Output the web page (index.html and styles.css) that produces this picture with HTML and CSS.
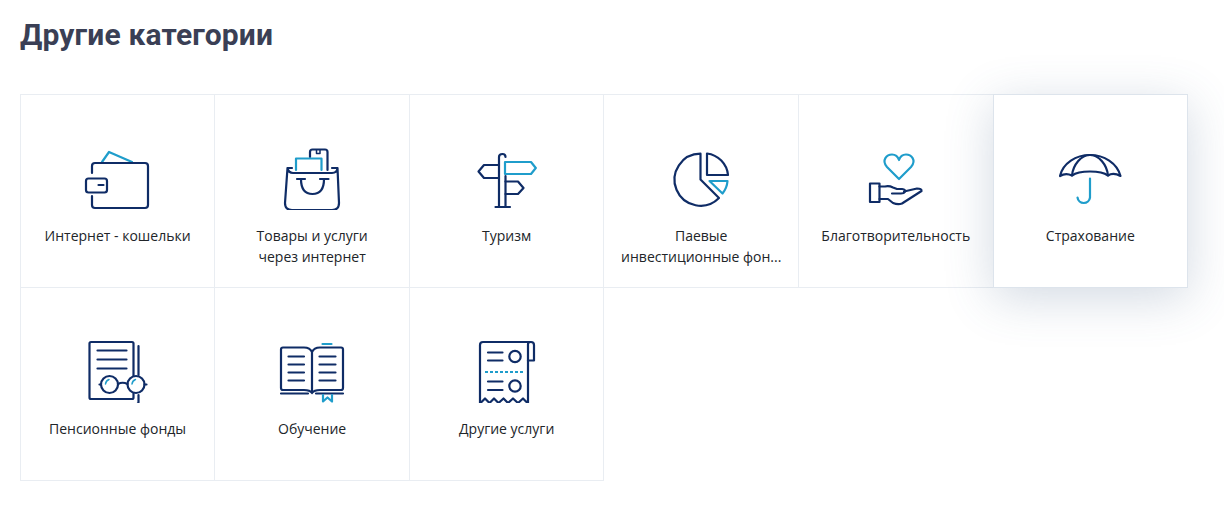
FILE: index.html
```html
<!DOCTYPE html>
<html lang="ru">
<head>
<meta charset="UTF-8">
<title>Другие категории</title>
<link rel="stylesheet" href="styles.css">
</head>
<body>
<h1 class="title">Другие категории</h1>
<div class="cats">
    <a class="cat">
        <svg class="ico" viewBox="78 146 80 64">
            <path class="bl" d="M102 162 L109 152 L132 162"/>
            <path class="dk" d="M92 173 V166 Q92 163 95 163 H145 Q148 163 148 166 V205 Q148 208 145 208 H95 Q92 208 92 205 V196"/>
            <rect class="dk" x="86" y="178.5" width="21" height="14" rx="2.5"/>
            <path class="dk" d="M98.5 185 H103.5"/>
        </svg>
        <span class="cat-name">Интернет - кошельки</span>
    </a>
    <a class="cat">
        <svg class="ico" viewBox="272 146 80 64">
            <path class="dk" d="M310 157 V152 Q310 149.5 312.5 149.5 H325 Q327.5 149.5 327.5 152 V170"/>
            <path class="dk thin" d="M316.5 150 V153.5 H320 V150"/>
            <path class="bl" d="M296 170 V158.5 H321.5 V170"/>
            <path class="dk" d="M292 168 H287.5 L285 203 Q285 210 292 210 H332 Q339 210 339 203 L337.5 168 H332 M287.5 168 Q288.5 173 293 173 H332 Q337 173 337.5 168"/>
            <path class="dk" d="M297 179 H305 M320 179 H328.5 M301 179 Q301 194 312.5 194 Q324 194 324 179"/>
        </svg>
        <span class="cat-name">Товары и услуги<br>через интернет</span>
    </a>
    <a class="cat">
        <svg class="ico" viewBox="467 146 80 64">
            <path class="dk" d="M499 207 V157 Q499 154 502.5 154 Q505.5 154 505.5 157 M505.5 176 V207 M495.5 207 H510"/>
            <path class="dk" d="M499 165 H484 L478.5 171.5 L484 178 H499"/>
            <path class="dk" d="M505.5 181.5 H518 L523.5 188 L518 194 H505.5"/>
            <path class="bl" d="M505 162 H531 L535.8 168 L531 174 H505 Z"/>
        </svg>
        <span class="cat-name">Туризм</span>
    </a>
    <a class="cat">
        <svg class="ico" viewBox="661 146 80 64">
            <path class="dk" d="M700.5 153.7 A26 26 0 1 0 719 198 L700.5 179.5 Z"/>
            <path class="dk" d="M707 153.5 A24 24 0 0 1 728 175 H707 Z"/>
            <path class="bl" d="M709.5 181 H727.5 Q727 188 722.5 193.5 Z"/>
        </svg>
        <span class="cat-name">Паевые<br>инвестиционные фон...</span>
    </a>
    <a class="cat">
        <svg class="ico" viewBox="856 146 80 64">
            <path class="bl" d="M899 179 L887 167 C881 160 887 154.5 892 154.5 C895.5 154.5 898 157 899 160 C900 157 902.5 154.5 906 154.5 C911 154.5 917 160 911 167 Z"/>
            <rect class="dk" x="870" y="183.5" width="9.5" height="18.5"/>
            <path class="dk" d="M879.5 186.5 H885 Q889 185.5 893 187.5 L897 189 H902 Q906 189.5 905 192 Q904 193.5 901 193.5 H892 M904 191.5 L917 188.5 Q922 188.5 921.5 191 L902 203.5 Q898 205 893 203 L888 199 H879.5"/>
        </svg>
        <span class="cat-name">Благотворительность</span>
    </a>
    <a class="cat is-active">
        <svg class="ico" viewBox="1050 146 80 64">
            <path class="dk" d="M1060 176 C1063 163 1076 155 1090 155 C1104 155 1117 163 1120.5 176 C1116 173.5 1111 173.5 1108 175.5 C1104 172.5 1097 171.5 1090 171.5 C1083 171.5 1076 172.5 1072 175.5 C1068 173.5 1064 173.5 1060 176 Z"/>
            <path class="dk" d="M1072 175.5 C1073 165 1081 155 1090 155 C1099 155 1107 165 1108 175.5"/>
            <path class="bl" d="M1090 178.5 V197.5 A6.3 6.3 0 0 1 1077.5 197.5"/>
        </svg>
        <span class="cat-name">Страхование</span>
    </a>
    <a class="cat">
        <svg class="ico" viewBox="78 339 80 64">
            <path class="dk" d="M133.5 376 V343.5 Q133.5 342 132 342 H91 Q89.5 342 89.5 343.5 V397.5 Q89.5 399 91 399 H132 Q133.5 399 133.5 397.5 V393"/>
            <path class="dk" d="M97.5 350.5 H126.5 M97.5 359.5 H126.5 M97.5 368.5 H126.5"/>
            <path class="dk" d="M138.5 346 V375 M138.5 395 V402 Q138.5 404 136.5 404 H94"/>
            <circle class="dk" cx="109.5" cy="384.5" r="8.5"/>
            <circle class="dk" cx="136" cy="384.5" r="8.5"/>
            <path class="dk" d="M118 384 Q122.5 381.5 127.5 384 M99.5 384.5 H101 M144.5 384.5 H146.5"/>
            <path class="bl thin" d="M105.5 384 Q106 380.5 109 379.5 M132 384 Q132.5 380.5 135.5 379.5"/>
        </svg>
        <span class="cat-name">Пенсионные фонды</span>
    </a>
    <a class="cat">
        <svg class="ico" viewBox="272 339 80 64">
            <path class="bl" d="M322.5 344 H331.5"/>
            <path class="dk" d="M312 352 Q310 347.5 304 347.5 H283 Q281 347.5 281 349.5 V388 Q281 390 283 390 H304 Q310 390 312 393 Q314 390 320 390 H341 Q343 390 343 388 V349.5 Q343 347.5 341 347.5 H320 Q314 347.5 312 352 V392"/>
            <path class="dk" d="M288.5 356.5 H304 M288.5 364.5 H304 M288.5 372.5 H304 M288.5 380.5 H304 M319.5 356.5 H335.5 M319.5 364.5 H335.5 M319.5 372.5 H335.5 M319.5 380.5 H335.5"/>
            <path class="dk" d="M281 393.5 H308 M316 393.5 H343"/>
            <path class="bl" d="M323 395 V401.5 L327.5 397.5 L332 401.5 V395"/>
        </svg>
        <span class="cat-name">Обучение</span>
    </a>
    <a class="cat">
        <svg class="ico" viewBox="467 339 80 64">
            <path class="dk" d="M480 403.5 V345 Q480 342 483 342 H531 Q534 342 534 345 V360.5 H528 V344 Q528 342 531 342"/>
            <path class="dk" d="M528 360 V403.5 L523 398.5 L518 403 L513 398.5 L508 403 L503.5 398.5 L498.5 403 L494 398.5 L489.5 403 L485 398.5 L480 403.5"/>
            <path class="dk" d="M488 352.5 H502.5 M488 360.5 H502.5 M488 381.5 H502.5 M488 390 H502.5"/>
            <circle class="dk" cx="515" cy="356.5" r="5.7"/>
            <circle class="dk" cx="515" cy="386" r="5.7"/>
            <path class="bl dash" d="M485 372 H523"/>
        </svg>
        <span class="cat-name">Другие услуги</span>
    </a>
</div>
</body>
</html>
```

FILE: styles.css
```css
body, html {
    margin: 0;
    padding: 0;
    background: #fff;
    font-family: "Open Sans", Arial, sans-serif;
}
.title {
    margin: 0;
    padding: 16px 20px 0;
    height: 78px;
    font-family: Roboto, "Noto Sans", sans-serif;
    font-size: 30px;
    line-height: 38px;
    font-weight: 700;
    letter-spacing: 0.15px;
    color: #3a3f55;
}
.cats {
    display: grid;
    grid-template-columns: repeat(6, 194.55px);
    grid-auto-rows: 193px;
    margin-left: 19.8px;
    padding-bottom: 1px;
}
.cat {
    display: flex;
    flex-direction: column;
    align-items: center;
    margin: 0 -1px -1px 0;
    padding: 51px 15px 0;
    border: 1px solid #e9edf2;
    background: #fff;
    color: #212529;
    text-align: center;
}
.cat.is-active {
    position: relative;
    z-index: 1;
    border-color: #dde4ec;
    box-shadow: 0 10px 45px rgba(70, 100, 140, 0.24);
}
.cat-name {
    margin-top: 15px;
    font-size: 14px;
    line-height: 21px;
    white-space: nowrap;
}
.ico {
    display: block;
    flex: none;
    width: 80px;
    height: 64px;
    fill: none;
    stroke-width: 2.2;
    stroke-linecap: round;
    stroke-linejoin: round;
}
.ico .dk {
    stroke: #0f2c66;
}
.ico .bl {
    stroke: #1f9dcb;
}
.ico .thin {
    stroke-width: 1.5;
}
.ico .dash {
    stroke-linecap: butt;
    stroke-dasharray: 3 2;
}
```
